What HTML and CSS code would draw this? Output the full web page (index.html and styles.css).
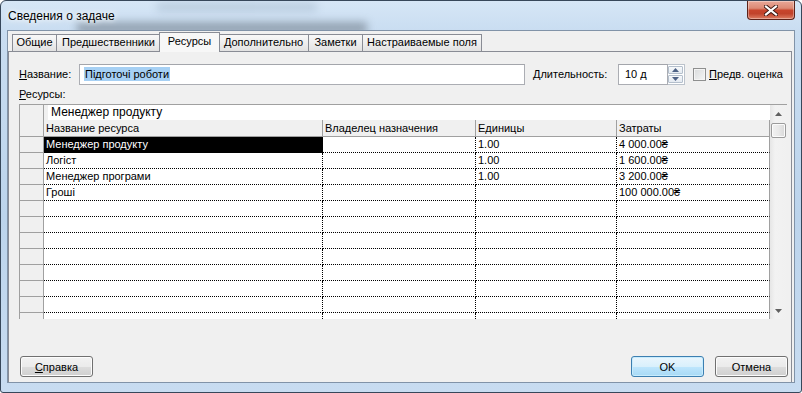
FILE: index.html
```html
<!DOCTYPE html>
<html lang="ru">
<head>
<meta charset="utf-8">
<title>Сведения о задаче</title>
<link rel="stylesheet" href="styles.css">
</head>
<body>
<div class="window">
  <div class="titlebar">
    <span class="title">Сведения о задаче</span>
    <div class="close">
      <svg width="14" height="11" viewBox="0 0 14 11">
        <path d="M2 1.5 L12 9.5 M12 1.5 L2 9.5" stroke="#3b1711" stroke-width="4" stroke-linecap="square"/>
        <path d="M2 1.5 L12 9.5 M12 1.5 L2 9.5" stroke="#ffffff" stroke-width="2.2" stroke-linecap="square"/>
      </svg>
    </div>
  </div>
  <div class="client">
    <div class="tabs">
      <div class="tab t1">Общие</div>
      <div class="tab t2">Предшественники</div>
      <div class="tab t3 active">Ресурсы</div>
      <div class="tab t4">Дополнительно</div>
      <div class="tab t5">Заметки</div>
      <div class="tab t6">Настраиваемые поля</div>
    </div>
    <div class="panel">
      <div class="row-name">
        <label class="lbl lbl-name"><u>Н</u>азвание:</label>
        <div class="input input-name"><span class="sel">Підготочі роботи</span></div>
        <label class="lbl lbl-dur"><u>Д</u>лительность:</label>
        <div class="input input-dur">10 д</div>
        <div class="spin">
          <div class="spin-btn"><svg width="7" height="4" viewBox="0 0 7 4"><path d="M0 4 L3.5 0 L7 4Z" fill="#4d6185"/></svg></div>
          <div class="spin-btn"><svg width="7" height="4" viewBox="0 0 7 4"><path d="M0 0 L3.5 4 L7 0Z" fill="#4d6185"/></svg></div>
        </div>
        <div class="check"></div>
        <label class="lbl lbl-est"><u>П</u>редв. оценка</label>
      </div>
      <div class="res-label"><u>Р</u>есурсы:</div>
      <div class="grid">
        <div class="gmain">
          <div class="gtop">
            <div class="corner"></div>
            <div class="gtop-right">
              <div class="editrow"><div class="editbox">Менеджер продукту</div></div>
              <div class="hrow">
                <div class="hcell c1">Название ресурса</div>
                <div class="hcell c2">Владелец назначения</div>
                <div class="hcell c3">Единицы</div>
                <div class="hcell c4">Затраты</div>
              </div>
            </div>
          </div>
          <div class="drow"><div class="rh"></div><div class="cell c1 selected">Менеджер продукту</div><div class="cell c2"></div><div class="cell c3">1.00</div><div class="cell c4">4 000.00₴</div></div>
          <div class="drow"><div class="rh"></div><div class="cell c1">Логіст</div><div class="cell c2"></div><div class="cell c3">1.00</div><div class="cell c4">1 600.00₴</div></div>
          <div class="drow"><div class="rh"></div><div class="cell c1">Менеджер програми</div><div class="cell c2"></div><div class="cell c3">1.00</div><div class="cell c4">3 200.00₴</div></div>
          <div class="drow"><div class="rh"></div><div class="cell c1">Гроші</div><div class="cell c2"></div><div class="cell c3"></div><div class="cell c4">100 000.00₴</div></div>
          <div class="drow"><div class="rh"></div><div class="cell c1"></div><div class="cell c2"></div><div class="cell c3"></div><div class="cell c4"></div></div>
          <div class="drow"><div class="rh"></div><div class="cell c1"></div><div class="cell c2"></div><div class="cell c3"></div><div class="cell c4"></div></div>
          <div class="drow"><div class="rh"></div><div class="cell c1"></div><div class="cell c2"></div><div class="cell c3"></div><div class="cell c4"></div></div>
          <div class="drow"><div class="rh"></div><div class="cell c1"></div><div class="cell c2"></div><div class="cell c3"></div><div class="cell c4"></div></div>
          <div class="drow"><div class="rh"></div><div class="cell c1"></div><div class="cell c2"></div><div class="cell c3"></div><div class="cell c4"></div></div>
          <div class="drow"><div class="rh"></div><div class="cell c1"></div><div class="cell c2"></div><div class="cell c3"></div><div class="cell c4"></div></div>
          <div class="drow"><div class="rh"></div><div class="cell c1"></div><div class="cell c2"></div><div class="cell c3"></div><div class="cell c4"></div></div>
          <div class="drow"><div class="rh"></div><div class="cell c1"></div><div class="cell c2"></div><div class="cell c3"></div><div class="cell c4"></div></div>
        </div>
        <div class="vscroll">
          <div class="sb-btn"><svg width="7" height="4" viewBox="0 0 7 4"><path d="M0 4 L3.5 0 L7 4Z" fill="#606060"/></svg></div>
          <div class="thumb"></div>
          <div class="sb-track"></div>
          <div class="sb-btn"><svg width="7" height="4" viewBox="0 0 7 4"><path d="M0 0 L3.5 4 L7 0Z" fill="#606060"/></svg></div>
        </div>
      </div>
      <div class="buttons">
        <button class="btn btn-help"><u>С</u>правка</button>
        <div class="spacer"></div>
        <button class="btn btn-ok">OK</button>
        <button class="btn btn-cancel">Отмена</button>
      </div>
    </div>
  </div>
</div>
</body>
</html>
```

FILE: styles.css
```css
* { box-sizing: border-box; }
html, body { margin: 0; padding: 0; }
body {
  width: 802px;
  height: 393px;
  overflow: hidden;
  background: #ffffff;
  font-family: "Liberation Sans", Arial, sans-serif;
  font-size: 11px;
  color: #000;
}
u { text-decoration: underline; text-underline-offset: 1px; }

.window {
  width: 802px;
  height: 393px;
  border: 1px solid #37475a;
  border-radius: 6px 6px 3px 3px;
  background: linear-gradient(180deg, #d6e6f6 0, #c9ddf1 30px, #bcd4ec 55%, #c8dcf1 100%);
  padding: 0 6px 9px 6px;
  display: flex;
  flex-direction: column;
  overflow: hidden;
  position: relative;
}

.titlebar {
  height: 29px;
  flex: none;
  display: flex;
  justify-content: space-between;
  align-items: flex-start;
  padding-left: 1px;
  position: relative;
}
.titlebar::before {
  content: "";
  position: absolute;
  left: 70px;
  top: 21px;
  width: 290px;
  height: 12px;
  background: #6f7b87;
  filter: blur(4px);
  opacity: 0.6;
}
.titlebar::after {
  content: "";
  position: absolute;
  left: 150px;
  top: 2px;
  width: 160px;
  height: 8px;
  background: #8ea3b8;
  filter: blur(4px);
  opacity: 0.4;
}
.title {
  font-size: 12px;
  line-height: 14px;
  margin-top: 8px;
  position: relative;
  z-index: 1;
  text-shadow: 0 0 5px #fff, 0 0 9px #fff;
}
.close {
  width: 48px;
  height: 20px;
  margin-top: -1px;
  border: 1px solid #5c2219;
  border-top-color: #6b3a33;
  border-radius: 0 0 4px 4px;
  background: linear-gradient(180deg, #e9a898 0, #dd8a75 40%, #c8452c 52%, #c1432b 70%, #dd7d63 100%);
  box-shadow: inset 0 0 0 1px rgba(255,255,255,0.35);
  display: flex;
  align-items: center;
  justify-content: center;
  position: relative;
  z-index: 1;
}

.client {
  flex: 1;
  border: 1px solid #8193a8;
  background: #f0f0f0;
  display: flex;
  flex-direction: column;
  position: relative;
  z-index: 1;
}

.tabs {
  height: 20px;
  flex: none;
  display: flex;
  align-items: flex-end;
  padding-left: 4px;
}
.tab {
  height: 17px;
  border: 1px solid #898c95;
  border-bottom: 0;
  margin-right: -1px;
  padding: 0;
  text-align: center;
  font-size: 11px;
  line-height: 15px;
  background: linear-gradient(180deg, #f8f8f8 0, #eeeeee 50%, #e2e2e2 100%);
  white-space: nowrap;
  overflow: hidden;
}
.t1 { width: 45px; }
.t2 { width: 105px; }
.t4 { width: 91px; }
.t5 { width: 55px; }
.t6 { width: 120px; }
.tab.active {
  width: 61px;
  height: 20px;
  margin: 0 -2px -1px -1px;
  line-height: 17px;
  background: #f7f7f7;
  position: relative;
  z-index: 2;
}

.panel {
  flex: 1;
  border: 1px solid #898c95;
  border-bottom: 0;
  margin-right: 2px;
  background: #f0f0f0;
  padding: 12px 0 0 10px;
  display: flex;
  flex-direction: column;
}

.row-name {
  height: 21px;
  display: flex;
  align-items: center;
}
.lbl { line-height: 13px; white-space: nowrap; }
.lbl-name { width: 60px; }
.lbl-dur { width: 85px; margin-left: 8px; }
.lbl-est { margin-left: 3px; }
.input {
  height: 21px;
  border: 1px solid #abadb3;
  border-top-color: #a3a5ab;
  background: #fff;
  line-height: 19px;
  white-space: nowrap;
}
.input-name { width: 446px; padding-left: 4px; }
.sel { background: #a6d0f4; padding: 0 1px; line-height: 14px; display: inline-block; }
.input-dur { width: 50px; padding-left: 6px; }
.spin {
  width: 17px;
  height: 21px;
  display: flex;
  flex-direction: column;
  border: 1px solid #bcc3cc;
  border-left: 0;
  background: #fff;
  padding: 1px 1px 1px 0;
  gap: 1px;
}
.spin-btn {
  flex: 1;
  border: 1px solid #b4bfcc;
  border-radius: 1px;
  background: linear-gradient(180deg, #f7f9fb 0, #e4eaf1 100%);
  display: flex;
  align-items: center;
  justify-content: center;
}
.check {
  width: 13px;
  height: 13px;
  margin-left: 8px;
  border: 1px solid #8e8f8f;
  background: linear-gradient(135deg, #d9dbdc 0, #f4f5f5 100%);
  box-shadow: inset 0 0 0 1px #f4f4f4;
}

.res-label {
  height: 19px;
  line-height: 19px;
}

.grid {
  width: 768px;
  height: 215px;
  display: flex;
}
.gmain {
  width: 751px;
  height: 215px;
  border-top: 1px solid #a0a0a0;
  border-left: 1px solid #a0a0a0;
  overflow: hidden;
  background: #fff;
}
.gtop { display: flex; }
.corner {
  width: 24px;
  height: 32px;
  border-right: 1px solid #a0a0a0;
  border-bottom: 1px solid #a0a0a0;
  background: #f0f0f0;
}
.gtop-right { flex: 1; display: flex; flex-direction: column; }
.editrow {
  height: 15px;
  background: #f0f0f0;
  padding-left: 4px;
  display: flex;
}
.editbox {
  flex: 1;
  background: #fff;
  font-size: 12px;
  line-height: 15px;
  padding-left: 3px;
  white-space: nowrap;
}
.hrow {
  height: 17px;
  display: flex;
  border-bottom: 1px solid #a0a0a0;
  background: #f0f0f0;
}
.hcell {
  line-height: 16px;
  padding-left: 2px;
  border-right: 1px solid #a0a0a0;
  white-space: nowrap;
}
.c1 { width: 279px; }
.c2 { width: 153px; }
.c3 { width: 141px; }
.c4 { width: 153px; }

.drow { display: flex; height: 16px; }
.rh {
  width: 24px;
  border-right: 1px solid #a0a0a0;
  border-bottom: 1px solid #a0a0a0;
  background: #f0f0f0;
}
.cell {
  height: 16px;
  line-height: 15px;
  padding-left: 2px;
  border-bottom: 1px dotted #000;
  border-right: 1px dotted #000;
  white-space: nowrap;
  overflow: hidden;
}
.cell.c4 { border-right: 1px solid #a0a0a0; }
.cell.selected { background: #000; color: #fff; }

.vscroll {
  width: 17px;
  height: 215px;
  border-top: 1px solid #a0a0a0;
  background: linear-gradient(90deg, #e6e6e6 0, #f2f2f2 30%, #f0f0f0 100%);
  display: flex;
  flex-direction: column;
  align-items: center;
}
.sb-btn {
  width: 17px;
  height: 17px;
  flex: none;
  display: flex;
  align-items: center;
  justify-content: center;
}
.thumb {
  width: 15px;
  height: 15px;
  margin-top: 1px;
  border: 1px solid #9b9b9b;
  border-radius: 2px;
  background: linear-gradient(90deg, #f2f2f2 0, #e9e9e9 50%, #d8d8d8 100%);
  box-shadow: inset 0 0 0 1px #fbfbfb;
}
.sb-track { flex: 1; }

.buttons {
  margin-top: 37px;
  display: flex;
  padding-right: 3px;
}
.spacer { flex: 1; }
.btn {
  width: 73px;
  height: 21px;
  padding: 0;
  font-family: "Liberation Sans", Arial, sans-serif;
  font-size: 11px;
  color: #000;
  border: 1px solid #707070;
  border-radius: 3px;
  background: linear-gradient(180deg, #f2f2f2 0, #ebebeb 50%, #dddddd 51%, #cfcfcf 100%);
  box-shadow: inset 0 0 0 1px #fcfcfc;
}
.btn-help { margin-left: 1px; }
.btn-ok {
  border-color: #3c7fb1;
  background: linear-gradient(180deg, #eaf6fd 0, #d9f0fc 50%, #bee6fd 51%, #a7d9f5 100%);
  box-shadow: inset 0 0 0 1px #c8ecfd;
}
.btn-cancel { margin-left: 11px; }
```
